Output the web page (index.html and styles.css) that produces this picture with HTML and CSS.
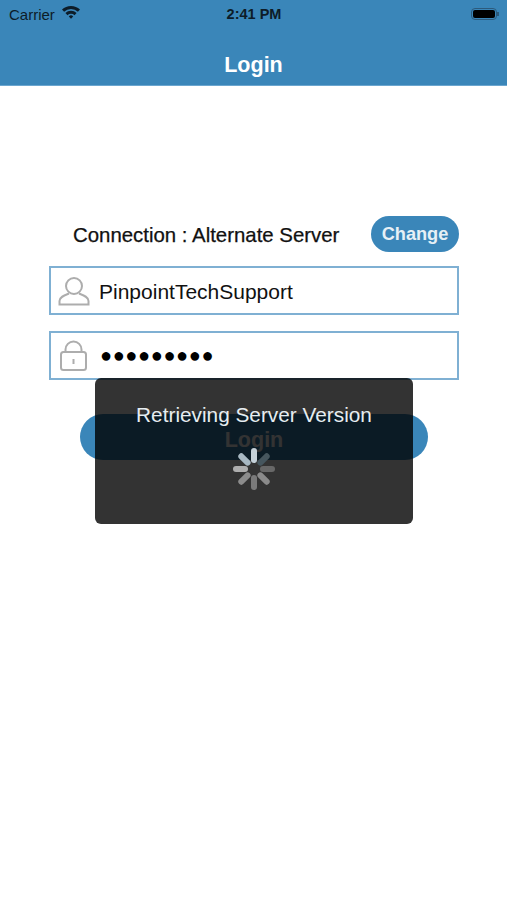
FILE: index.html
```html
<!DOCTYPE html>
<html>
<head>
  <meta charset="utf-8">
  <meta name="viewport" content="width=device-width, initial-scale=1.0">
  <title>Login</title>
  <link rel="stylesheet" href="styles.css">
</head>
<body>
<header class="app-header">
  <div class="status-bar">
    <div class="status-left">
      <span>Carrier</span>
      <svg class="wifi" width="18" height="14" viewBox="0 0 18 14">
        <path d="M0 4.600 A12.800 12.800 0 0 1 18 4.600 L15.900 6.800 A9.800 9.800 0 0 0 2.100 6.800 Z" fill="#0d1c28"/>
        <path d="M3.400 8 A8 8 0 0 1 14.600 8 L12.500 10.200 A5 5 0 0 0 5.500 10.200 Z" fill="#0d1c28"/>
        <path d="M6.800 11.400 A3.200 3.200 0 0 1 11.200 11.400 L9 13.800 Z" fill="#0d1c28"/>
      </svg>
    </div>
    <div class="status-time">2:41 PM</div>
    <div class="status-right">
      <div class="battery"><div class="battery-fill"></div></div>
      <div class="battery-tip"></div>
    </div>
  </div>
  <h1 class="nav-title">Login</h1>
</header>
<main class="login-form">
  <div class="connection-row">
    <span class="connection-label">Connection : Alternate Server</span>
    <button class="change-btn" type="button">Change</button>
  </div>
  <div class="field">
    <svg class="field-icon" width="32" height="30" viewBox="0 0 32 30" fill="none" stroke="#adadad" stroke-width="2">
      <circle cx="16" cy="10" r="8"/>
      <path d="M11 17.500 C7 19 1.500 20.500 1.500 25 V28.500 H30.500 V25 C30.500 20.500 25 19 21 17.500"/>
    </svg>
    <span class="field-text">PinpointTechSupport</span>
  </div>
  <div class="field">
    <svg class="field-icon" width="32" height="32" viewBox="0 0 32 32" fill="none" stroke="#adadad" stroke-width="2">
      <path d="M7.500 12 V9.500 A8 8 0 0 1 23.500 9.500 V12"/>
      <rect x="3" y="12" width="25" height="18" rx="2.500"/>
      <rect x="14.500" y="19" width="2" height="5" fill="#adadad" stroke="none"/>
    </svg>
    <span class="field-text password-dots">●●●●●●●●●</span>
  </div>
  <button class="login-btn" type="button">Login</button>
</main>
<div class="hud">
  <div class="hud-text">Retrieving Server Version</div>
  <svg class="spinner" width="44" height="44" viewBox="0 0 44 44" stroke-width="6" stroke-linecap="round">
    <line x1="22" y1="4" x2="22" y2="13" stroke="#c4d0d8"/>
    <line x1="34.700" y1="9.300" x2="28.400" y2="15.600" stroke="#46565e"/>
    <line x1="40" y1="22" x2="31" y2="22" stroke="#686868"/>
    <line x1="34.700" y1="34.700" x2="28.400" y2="28.400" stroke="#8a8a8a"/>
    <line x1="22" y1="40" x2="22" y2="31" stroke="#7a7a7a"/>
    <line x1="9.300" y1="34.700" x2="15.600" y2="28.400" stroke="#8c8c8c"/>
    <line x1="4" y1="22" x2="13" y2="22" stroke="#aeaeae"/>
    <line x1="9.300" y1="9.300" x2="15.600" y2="15.600" stroke="#a8b8c2"/>
  </svg>
</div>
</body>
</html>
```

FILE: styles.css
```css
html, body { height: 100%; }
body { font-family: "Liberation Sans", Arial, sans-serif; margin: 0; padding: 0; background: #fff; color: #111; position: relative; overflow: hidden; }

.app-header { background: #3a86b9; height: 86px; border-bottom: 1px solid #6ba6cf; box-sizing: border-box; }
.status-bar { display: flex; align-items: center; justify-content: space-between; height: 28px; padding: 0 8px 0 9px; color: #0d1c28; font-size: 15px; }
.status-left { display: flex; align-items: center; gap: 7px; width: 120px; }
.wifi { margin-top: -4px; }
.status-time { font-weight: bold; font-size: 14.500px; }
.status-right { display: flex; align-items: center; justify-content: flex-end; width: 120px; }
.battery { width: 26px; height: 12px; box-sizing: border-box; border: 1px solid #2c5a7c; border-radius: 4px; padding: 1px; }
.battery-fill { height: 100%; background: #000; border-radius: 2px; }
.battery-tip { width: 2px; height: 4px; background: #2c5a7c; }
.nav-title { margin: 24px 0 0; text-align: center; font-size: 21.500px; line-height: 26px; color: #fff; font-weight: bold; }

.login-form { padding: 130px 48px 0 49px; display: flex; flex-direction: column; }
.connection-row { display: flex; align-items: center; justify-content: space-between; height: 36px; margin-bottom: 14px; padding-left: 24px; }
.connection-label { font-size: 20.400px; color: #111; -webkit-text-stroke: 0.250px #111; padding-top: 2px; }
.change-btn { width: 88px; height: 36px; background: #3a86b9; color: #e6f0f6; border: none; border-radius: 18px; font-family: inherit; font-size: 18.200px; font-weight: bold; padding: 0; }

.field { display: flex; align-items: center; height: 49px; box-sizing: border-box; border: 2px solid #7fb0d3; margin-bottom: 16px; padding-left: 7px; }
.field-icon { flex: none; }
.field-text { font-size: 21px; color: #111; margin-left: 9px; padding-top: 2px; }
.password-dots { font-size: 20px; letter-spacing: 0.600px; margin-left: 10px; color: #000; padding-top: 0; margin-top: -1px; }

.login-btn { align-self: center; margin: 18px 0 0; width: 348px; height: 46px; background: #3a86b9; color: #fff; border: none; border-radius: 23px; font-family: inherit; font-size: 21.500px; font-weight: bold; padding: 6px 0 0; }

.hud { position: absolute; left: 95px; top: 378px; width: 318px; height: 146px; background: rgba(0, 0, 0, 0.8); border-radius: 6px; display: flex; flex-direction: column; align-items: center; }
.hud-text { margin-top: 25px; font-size: 20.800px; line-height: 24px; color: #e6edf1; }
.spinner { margin-top: 20px; }
```
